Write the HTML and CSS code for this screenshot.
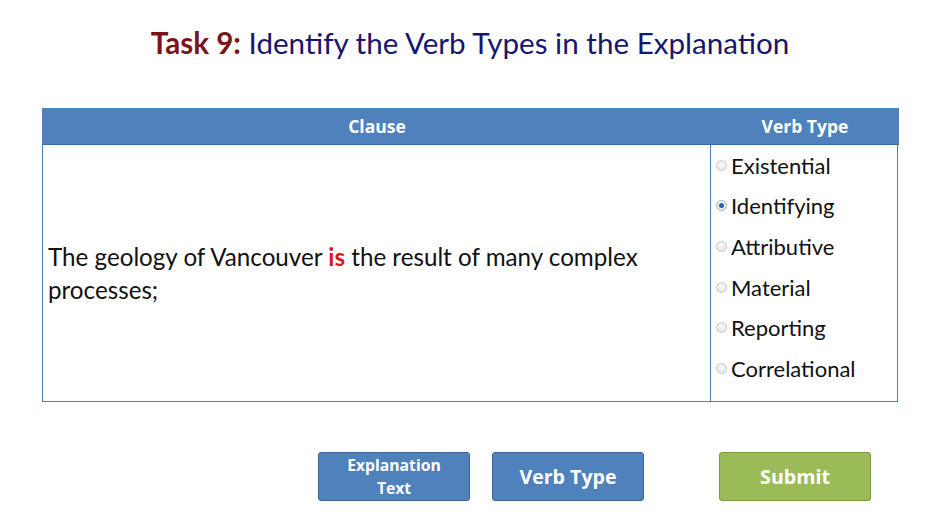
FILE: index.html
```html
<!DOCTYPE html>
<html>
<head>
<meta charset="utf-8">
<link rel="stylesheet" href="styles.css">
</head>
<body>
<h1 class="title"><span class="task">Task 9:</span> Identify the Verb Types in the Explanation</h1>
<div class="table">
  <div class="th">Clause</div>
  <div class="th">Verb Type</div>
  <div class="clause"><p class="clause-text">The geology of Vancouver <b class="verb">is</b> the result of many complex<br>processes;</p></div>
  <div class="options">
    <label class="opt"><span class="radio"></span>Existential</label>
    <label class="opt"><span class="radio checked"></span>Identifying</label>
    <label class="opt"><span class="radio"></span>Attributive</label>
    <label class="opt"><span class="radio"></span>Material</label>
    <label class="opt"><span class="radio"></span>Reporting</label>
    <label class="opt"><span class="radio"></span>Correlational</label>
  </div>
</div>
<div class="buttons">
  <button class="btn blue small">Explanation<br>Text</button>
  <button class="btn blue">Verb Type</button>
  <button class="btn green">Submit</button>
</div>
</body>
</html>
```
FILE: styles.css
```css
html, body {
  margin: 0;
  padding: 0;
  background: #ffffff;
}
body {
  width: 940px;
  height: 528px;
  overflow: hidden;
  font-family: "Lato", "Open Sans", sans-serif;
}
.title {
  margin: 0;
  padding-top: 25px;
  height: 38px;
  line-height: 36px;
  text-align: center;
  font-size: 29.6px;
  font-weight: normal;
  color: #16166e;
}
.task {
  color: #7b1416;
  font-weight: bold;
}
.table {
  margin: 45px 0 0 42px;
  width: 856px;
  display: grid;
  grid-template-columns: 668px 188px;
  grid-template-rows: 37px 256px;
  box-sizing: border-box;
  border: 1px solid #4f81bd;
  border-top: none;
}
.th {
  background: #4f81bd;
  color: #fff;
  font-family: "Open Sans", sans-serif;
  font-weight: bold;
  font-size: 17.5px;
  display: flex;
  align-items: center;
  justify-content: center;
  border-bottom: 1px solid #3d6a9e;
}
.clause {
  display: flex;
  align-items: center;
  padding: 0 20px 0 5px;
  border-right: 1px solid #4f81bd;
}
.clause-text {
  margin: 0;
  font-size: 24.2px;
  line-height: 33px;
  color: #111;
}
.verb {
  color: #e0141c;
  font-weight: bold;
}
.options {
  display: flex;
  flex-direction: column;
  padding-left: 5px;
}
.opt {
  display: flex;
  align-items: center;
  height: 40.6px;
  font-size: 22px;
  color: #111;
}
.radio {
  width: 9px;
  height: 9px;
  border-radius: 50%;
  border: 1px solid #c8c8c8;
  background: radial-gradient(circle at 50% 35%, #fafafa, #e2e2e2);
  margin-right: 4px;
  position: relative;
  flex: none;
}
.radio.checked {
  border-color: #a8b4c4;
}
.radio.checked::after {
  content: "";
  position: absolute;
  left: 2px;
  top: 2px;
  width: 5px;
  height: 5px;
  border-radius: 50%;
  background: #2f5ea8;
}
.buttons {
  display: flex;
  padding-left: 318px;
  margin-top: 50px;
}
.btn {
  width: 152px;
  height: 49px;
  border-radius: 3px;
  color: #fff;
  font-family: "Open Sans", sans-serif;
  font-weight: bold;
  font-size: 19.6px;
  padding: 0;
  cursor: pointer;
}
.btn.small {
  font-size: 15.7px;
  line-height: 23px;
}
.blue {
  background: #4f81bd;
  border: 1px solid #3a6595;
}
.green {
  background: #9bbb59;
  border: 1px solid #7c9a42;
  margin-left: 75px;
}
.blue + .blue {
  margin-left: 22px;
}
```
